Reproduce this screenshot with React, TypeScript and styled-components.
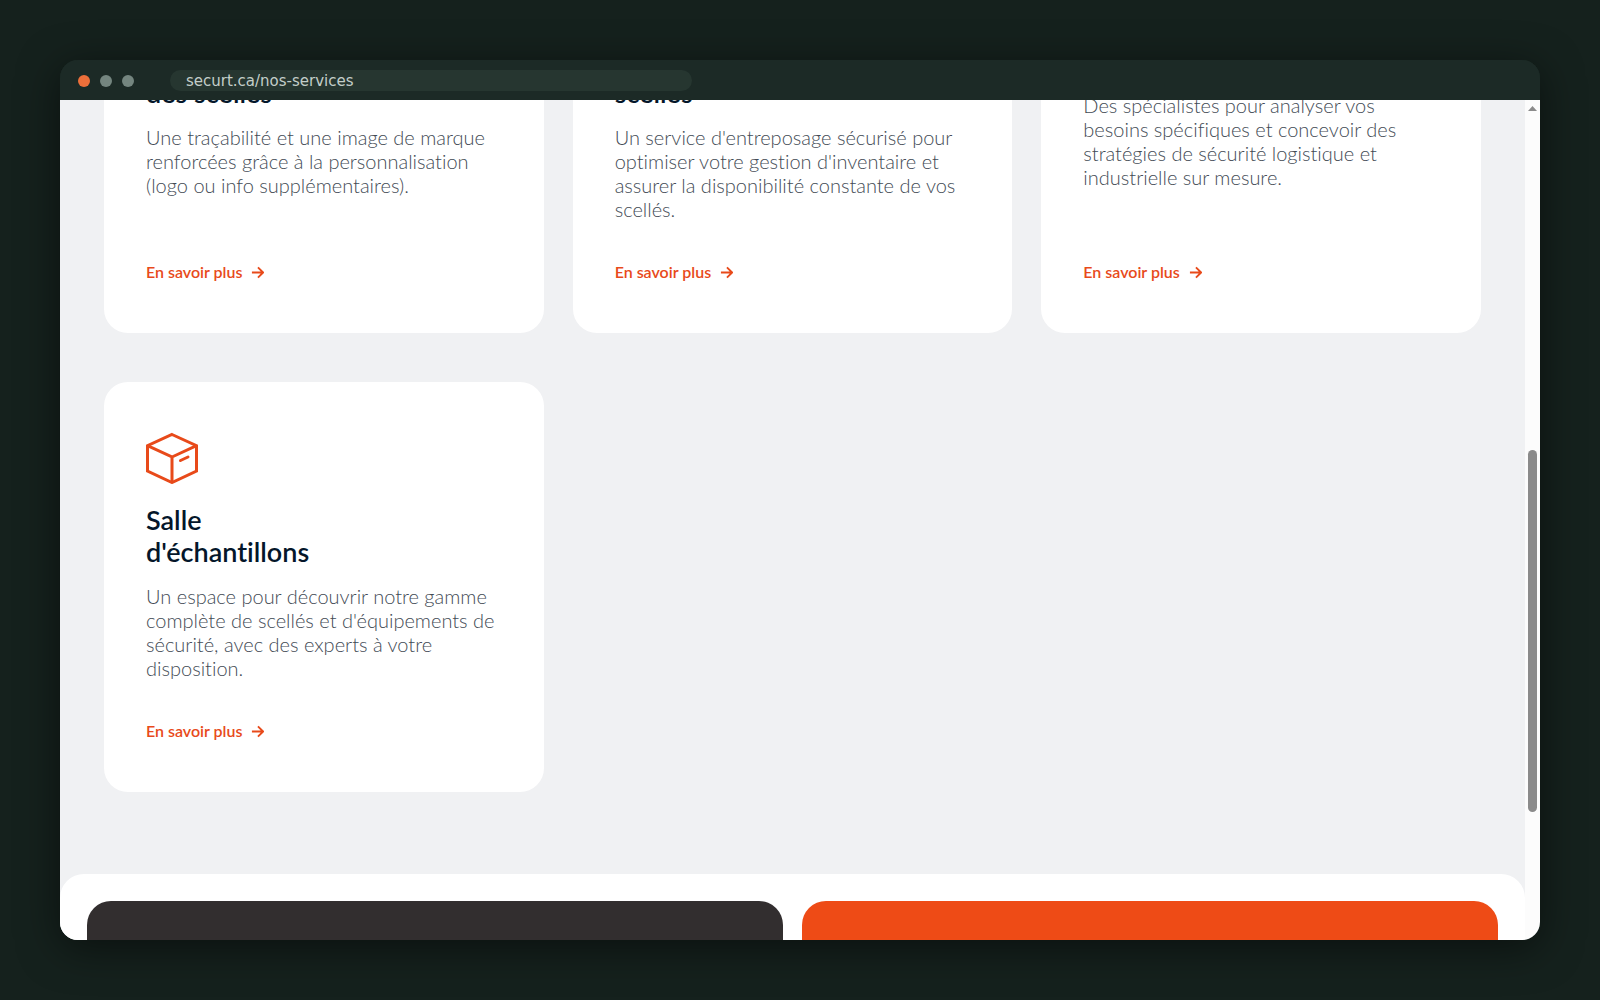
import React from "react";
import styled, { createGlobalStyle } from "styled-components";

const colors = {
  backdrop: "#15211d",
  chrome: "#1c2a26",
  address: "#263630",
  addressText: "#c3cec9",
  surface: "#f0f1f3",
  ink: "#04162a",
  body: "#434b55",
  accent: "#e84a1a",
  orange: "#ee4b16",
  charcoal: "#322e2f",
};

const GlobalStyle = createGlobalStyle`
  *, *::before, *::after { box-sizing: border-box; }
  body {
    margin: 0;
    background: ${colors.backdrop};
    font-family: Lato, "Liberation Sans", sans-serif;
    font-variant-ligatures: none;
  }
  h2, p { margin: 0; }
`;

const Desktop = styled.div`
  display: flex;
  height: 100vh;
  padding: 60px;
`;

const BrowserWindow = styled.div`
  display: flex;
  flex: 1;
  flex-direction: column;
  min-width: 0;
  overflow: hidden;
  border-radius: 18px;
  background: ${colors.chrome};
  box-shadow: 0 8px 40px rgba(0, 0, 0, 0.5);
`;

const TitleBar = styled.header`
  display: flex;
  flex: none;
  align-items: center;
  gap: 36px;
  height: 40px;
  padding: 1px 18px 0;
  background: ${colors.chrome};
`;

const WindowDots = styled.div`
  display: flex;
  gap: 10px;
`;

const Dot = styled.span<{ $color: string }>`
  width: 12px;
  height: 12px;
  border-radius: 50%;
  background: ${(p) => p.$color};
`;

const Address = styled.input`
  width: 522px;
  height: 21px;
  padding: 0 16px;
  border: 0;
  border-radius: 11px;
  outline: 0;
  background: ${colors.address};
  color: ${colors.addressText};
  font: 15px "DejaVu Sans", sans-serif;
`;

const Viewport = styled.div`
  display: flex;
  flex: 1;
  min-height: 0;
`;

const Page = styled.main`
  flex: 1;
  min-width: 0;
  overflow: hidden;
  background: ${colors.surface};
`;

const Services = styled.section`
  display: grid;
  grid-template-columns: repeat(3, 1fr);
  gap: 49px 29px;
  margin-top: -177px;
  padding: 0 44px 82px;
`;

const Card = styled.article`
  display: flex;
  flex-direction: column;
  align-items: flex-start;
  padding: 50px 42px 49px;
  border-radius: 24px;
  background: #ffffff;
`;

const Icon = styled.svg`
  width: 52px;
  height: 52px;
  margin-bottom: 20px;
  fill: none;
  stroke: ${colors.accent};
  stroke-width: 3;
`;

const CardTitle = styled.h2`
  margin-bottom: 16px;
  color: ${colors.ink};
  font-size: 27px;
  font-weight: 600;
  line-height: 32px;
  white-space: pre-line;
`;

const CardText = styled.p`
  margin-bottom: 39px;
  color: ${colors.body};
  font-size: 20px;
  font-weight: 300;
  line-height: 24px;
  white-space: pre-line;
`;

const CardLink = styled.a`
  display: flex;
  align-items: center;
  gap: 9px;
  margin-top: auto;
  color: ${colors.accent};
  font-size: 16px;
  font-weight: 600;
  line-height: 24px;
  text-decoration: none;
`;

const Arrow = styled.svg`
  width: 13px;
  height: 13px;
  fill: none;
  stroke: currentColor;
  stroke-width: 2;
`;

const CallToAction = styled.section`
  display: grid;
  grid-template-columns: repeat(2, 1fr);
  gap: 19px;
  padding: 27px;
  border-radius: 24px 24px 0 0;
  background: #ffffff;
`;

const Panel = styled.div<{ $color: string }>`
  min-height: 320px;
  border-radius: 24px;
  background: ${(p) => p.$color};
`;

const Scrollbar = styled.div`
  display: grid;
  flex: none;
  grid-template-rows: 6fr 5fr 339fr 362fr 128fr;
  justify-items: center;
  width: 15px;
  background: #fcfcfc;
`;

const ScrollUp = styled.span`
  grid-row: 2;
  width: 9px;
  background: #8b8b8b;
  clip-path: polygon(50% 0, 100% 100%, 0 100%);
`;

const Thumb = styled.span`
  grid-row: 4;
  width: 9px;
  border-radius: 5px;
  background: #8b8b8b;
`;

const BoxIcon = () => (
  <Icon viewBox="0 0 52 52" aria-hidden="true">
    <path d="M26 2.500 50.500 13.700V39L26 50.500 1.500 39V13.700Z" />
    <path d="M1.500 13.700 26 25V50.500M26 25 50.500 13.700" />
    <path d="M34.500 28.500 42 25" strokeLinecap="round" />
  </Icon>
);

const TagIcon = () => (
  <Icon viewBox="0 0 52 52" aria-hidden="true">
    <path d="M3 3H28L49 24 28 49 3 26Z" />
    <circle cx="15" cy="15" r="4" />
  </Icon>
);

const SearchIcon = () => (
  <Icon viewBox="0 0 52 52" aria-hidden="true">
    <circle cx="22" cy="22" r="19" />
    <path d="M36 36 50 50" />
  </Icon>
);

type Service = { title: string; text: string; icon: React.ReactNode };

const services: Service[] = [
  {
    title: "Personnalisation\ndes scellés",
    text: "Une traçabilité et une image de marque\nrenforcées grâce à la personnalisation\n(logo ou info supplémentaires).",
    icon: <TagIcon />,
  },
  {
    title: "Entreposage de\nscellés",
    text: "Un service d'entreposage sécurisé pour\noptimiser votre gestion d'inventaire et\nassurer la disponibilité constante de vos\nscellés.",
    icon: <BoxIcon />,
  },
  {
    title: "Consultation",
    text: "Des spécialistes pour analyser vos\nbesoins spécifiques et concevoir des\nstratégies de sécurité logistique et\nindustrielle sur mesure.",
    icon: <SearchIcon />,
  },
  {
    title: "Salle\nd'échantillons",
    text: "Un espace pour découvrir notre gamme\ncomplète de scellés et d'équipements de\nsécurité, avec des experts à votre\ndisposition.",
    icon: <BoxIcon />,
  },
];

const ServiceCard = ({ title, text, icon }: Service) => (
  <Card>
    {icon}
    <CardTitle>{title}</CardTitle>
    <CardText>{text}</CardText>
    <CardLink href="#">
      En savoir plus
      <Arrow viewBox="0 0 14 14" aria-hidden="true">
        <path d="M1 7H12.500M7.500 1.500 13 7 7.500 12.500" />
      </Arrow>
    </CardLink>
  </Card>
);

export default function App() {
  return (
    <>
      <GlobalStyle />
      <Desktop>
        <BrowserWindow>
          <TitleBar>
            <WindowDots>
              <Dot $color="#ec6f3a" />
              <Dot $color="#74857f" />
              <Dot $color="#74857f" />
            </WindowDots>
            <Address aria-label="Adresse" readOnly value="securt.ca/nos-services" />
          </TitleBar>
          <Viewport>
            <Page>
              <Services>
                {services.map((service) => (
                  <ServiceCard key={service.title} {...service} />
                ))}
              </Services>
              <CallToAction>
                <Panel $color={colors.charcoal} />
                <Panel $color={colors.orange} />
              </CallToAction>
            </Page>
            <Scrollbar>
              <ScrollUp />
              <Thumb />
            </Scrollbar>
          </Viewport>
        </BrowserWindow>
      </Desktop>
    </>
  );
}
